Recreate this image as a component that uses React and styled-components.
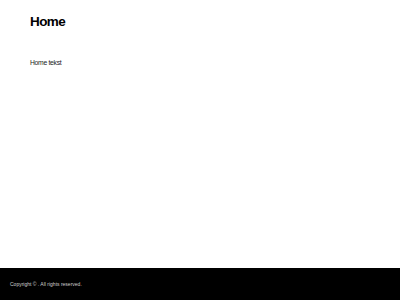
import React from "react";
import { styled, createGlobalStyle } from "styled-components";

const GlobalStyle = createGlobalStyle`
  html, body, #root {
    margin: 0;
    padding: 0;
    height: 100%;
  }
  body {
    font-family: "Liberation Sans", Arial, sans-serif;
    background: #ffffff;
  }
`;

const App = () => {
  return (
    <Page>
      <GlobalStyle />
      <Main>
        <Title>Home</Title>
        <Text>Home tekst</Text>
      </Main>
      <Footer>
        <FooterText>Copyright © . All rights reserved.</FooterText>
      </Footer>
    </Page>
  );
};

export default App;

const Page = styled.div`
  box-sizing: border-box;
  display: flex;
  flex-direction: column;
  min-height: 100vh;
`;

const Main = styled.main`
  flex: 1;
  padding: 14px 30px;
`;

const Title = styled.h1`
  margin: 0;
  font-size: 13.5px;
  font-weight: bold;
  letter-spacing: -0.6px;
  color: #000;
  line-height: 16px;
`;

const Text = styled.p`
  margin: 29px 0 0;
  font-size: 6.8px;
  letter-spacing: -0.3px;
  color: #222;
`;

const Footer = styled.footer`
  display: flex;
  align-items: center;
  height: 32px;
  padding: 0 10px;
  background-color: #000;
`;

const FooterText = styled.p`
  margin: 0;
  font-size: 5px;
  color: #cfcfcf;
`;
